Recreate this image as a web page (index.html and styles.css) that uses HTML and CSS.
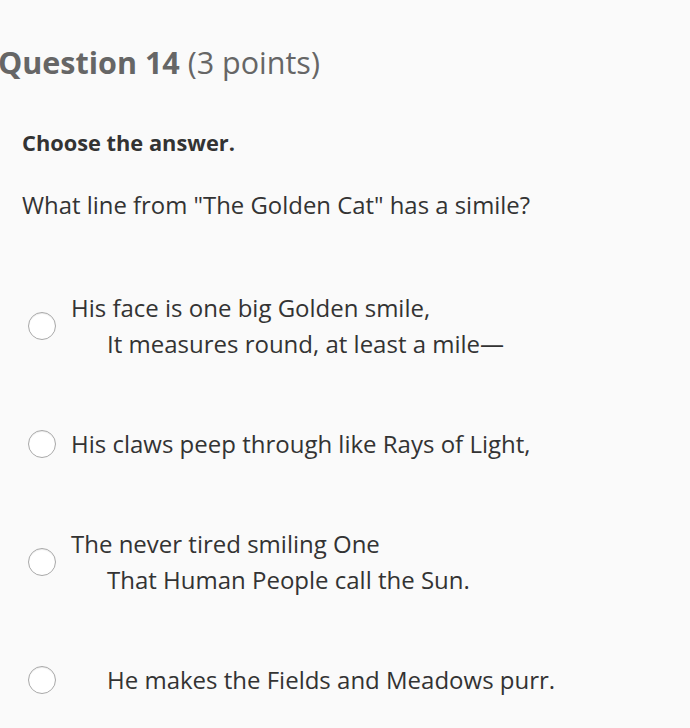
FILE: index.html
```html
<!DOCTYPE html>
<html lang="en">
<head>
<meta charset="utf-8">
<title>Question 14</title>
<link rel="stylesheet" href="styles.css">
</head>
<body>
<div class="question">
  <h2 class="q-title"><span class="q-name">Question 14</span> <span class="q-points">(3 points)</span></h2>
  <div class="q-body">
    <p class="q-instr">Choose the answer.</p>
    <p class="q-text">What line from "The Golden Cat" has a simile?</p>
  </div>
  <ul class="answers">
    <li class="answer">
      <span class="radio"></span>
      <div class="answer-text">
        <div class="line">His face is one big Golden smile,</div>
        <div class="line indent">It measures round, at least a mile—</div>
      </div>
    </li>
    <li class="answer">
      <span class="radio"></span>
      <div class="answer-text">
        <div class="line">His claws peep through like Rays of Light,</div>
      </div>
    </li>
    <li class="answer">
      <span class="radio"></span>
      <div class="answer-text">
        <div class="line">The never tired smiling One</div>
        <div class="line indent">That Human People call the Sun.</div>
      </div>
    </li>
    <li class="answer">
      <span class="radio"></span>
      <div class="answer-text">
        <div class="line indent">He makes the Fields and Meadows purr.</div>
      </div>
    </li>
  </ul>
</div>
</body>
</html>
```
FILE: styles.css
```css
html, body {
  margin: 0;
  padding: 0;
  background: #fafafa;
}
body {
  font-family: "Open Sans", Lato, sans-serif;
  color: #333;
  width: 690px;
  height: 728px;
  overflow: hidden;
}
.question {
  padding: 40px 0 0 0;
}
.q-title {
  margin: 0 0 0 -2px;
  font-size: 30.5px;
  line-height: 44px;
  font-weight: normal;
  color: #666;
}
.q-name {
  font-weight: bold;
}
.q-body {
  padding: 0 0 0 22px;
}
.q-instr {
  margin: 44px 0 0 0;
  font-size: 21.8px;
  line-height: 30px;
  font-weight: bold;
}
.q-text {
  margin: 32px 0 0 0;
  font-size: 23.9px;
  line-height: 30px;
}
.answers {
  list-style: none;
  margin: 70px 0 0 0;
  padding: 0 0 0 28px;
  display: flex;
  flex-direction: column;
  gap: 64px;
}
.answer {
  display: flex;
  align-items: center;
  gap: 15px;
}
.radio {
  flex: none;
  width: 26px;
  height: 26px;
  border-radius: 50%;
  border: 1px solid #a9a9a9;
  background: #fff;
  box-shadow: inset 0 1px 1px rgba(0,0,0,0.08);
}
.answer-text {
  font-size: 24px;
  line-height: 36px;
}
.indent {
  padding-left: 36px;
}
```
